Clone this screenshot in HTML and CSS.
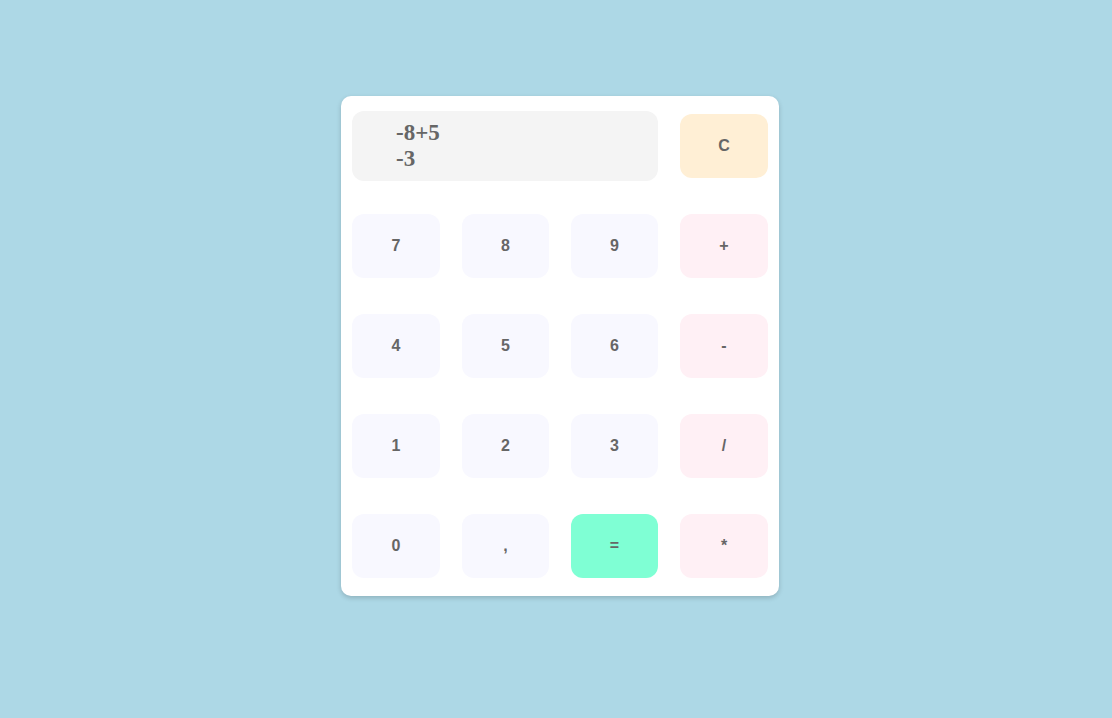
FILE: index.html
```html
<!DOCTYPE html>
<html>
<head>
<meta charset="utf-8">
<link rel="stylesheet" href="styles.css">
</head>
<body>
<div class="calc">
  <div class="display">
    <div class="line">-8+5</div>
    <div class="line">-3</div>
  </div>
  <button class="key clear">C</button>
  <button class="key num">7</button>
  <button class="key num">8</button>
  <button class="key num">9</button>
  <button class="key op">+</button>
  <button class="key num">4</button>
  <button class="key num">5</button>
  <button class="key num">6</button>
  <button class="key op">-</button>
  <button class="key num">1</button>
  <button class="key num">2</button>
  <button class="key num">3</button>
  <button class="key op">/</button>
  <button class="key num">0</button>
  <button class="key num">,</button>
  <button class="key eq">=</button>
  <button class="key op">*</button>
</div>
</body>
</html>
```
FILE: styles.css
```css
html, body {
  margin: 0;
  padding: 0;
}
body {
  background: #add8e6;
  width: 1112px;
  height: 718px;
  display: flex;
  justify-content: center;
  padding-top: 96px;
  box-sizing: border-box;
  padding-left: 8px;
}
.calc {
  width: 438px;
  height: 500px;
  box-sizing: border-box;
  background: #fff;
  border-radius: 10px;
  box-shadow: 0 2px 5px rgba(0, 0, 0, 0.18);
  padding: 0 11px;
  display: grid;
  grid-template-columns: 88px 87px 87px 88px;
  grid-auto-rows: 100px;
  column-gap: 22px;
  align-items: center;
}
.display {
  grid-column: span 3;
  height: 70px;
  box-sizing: border-box;
  background: #f4f4f4;
  border-radius: 12px;
  padding: 0 0 0 44px;
  display: flex;
  flex-direction: column;
  justify-content: center;
  font-family: "Liberation Serif", serif;
  font-weight: bold;
  font-size: 23px;
  line-height: 26px;
  color: #666;
}
.key {
  height: 64px;
  border: none;
  border-radius: 12px;
  font-family: "Liberation Sans", Arial, sans-serif;
  font-weight: bold;
  font-size: 16px;
  color: #666;
  padding: 0;
  margin: 0;
}
.num { background: #f8f8ff; }
.op { background: #fff0f5; }
.clear { background: #ffefd5; }
.eq { background: #7fffd4; }
```
